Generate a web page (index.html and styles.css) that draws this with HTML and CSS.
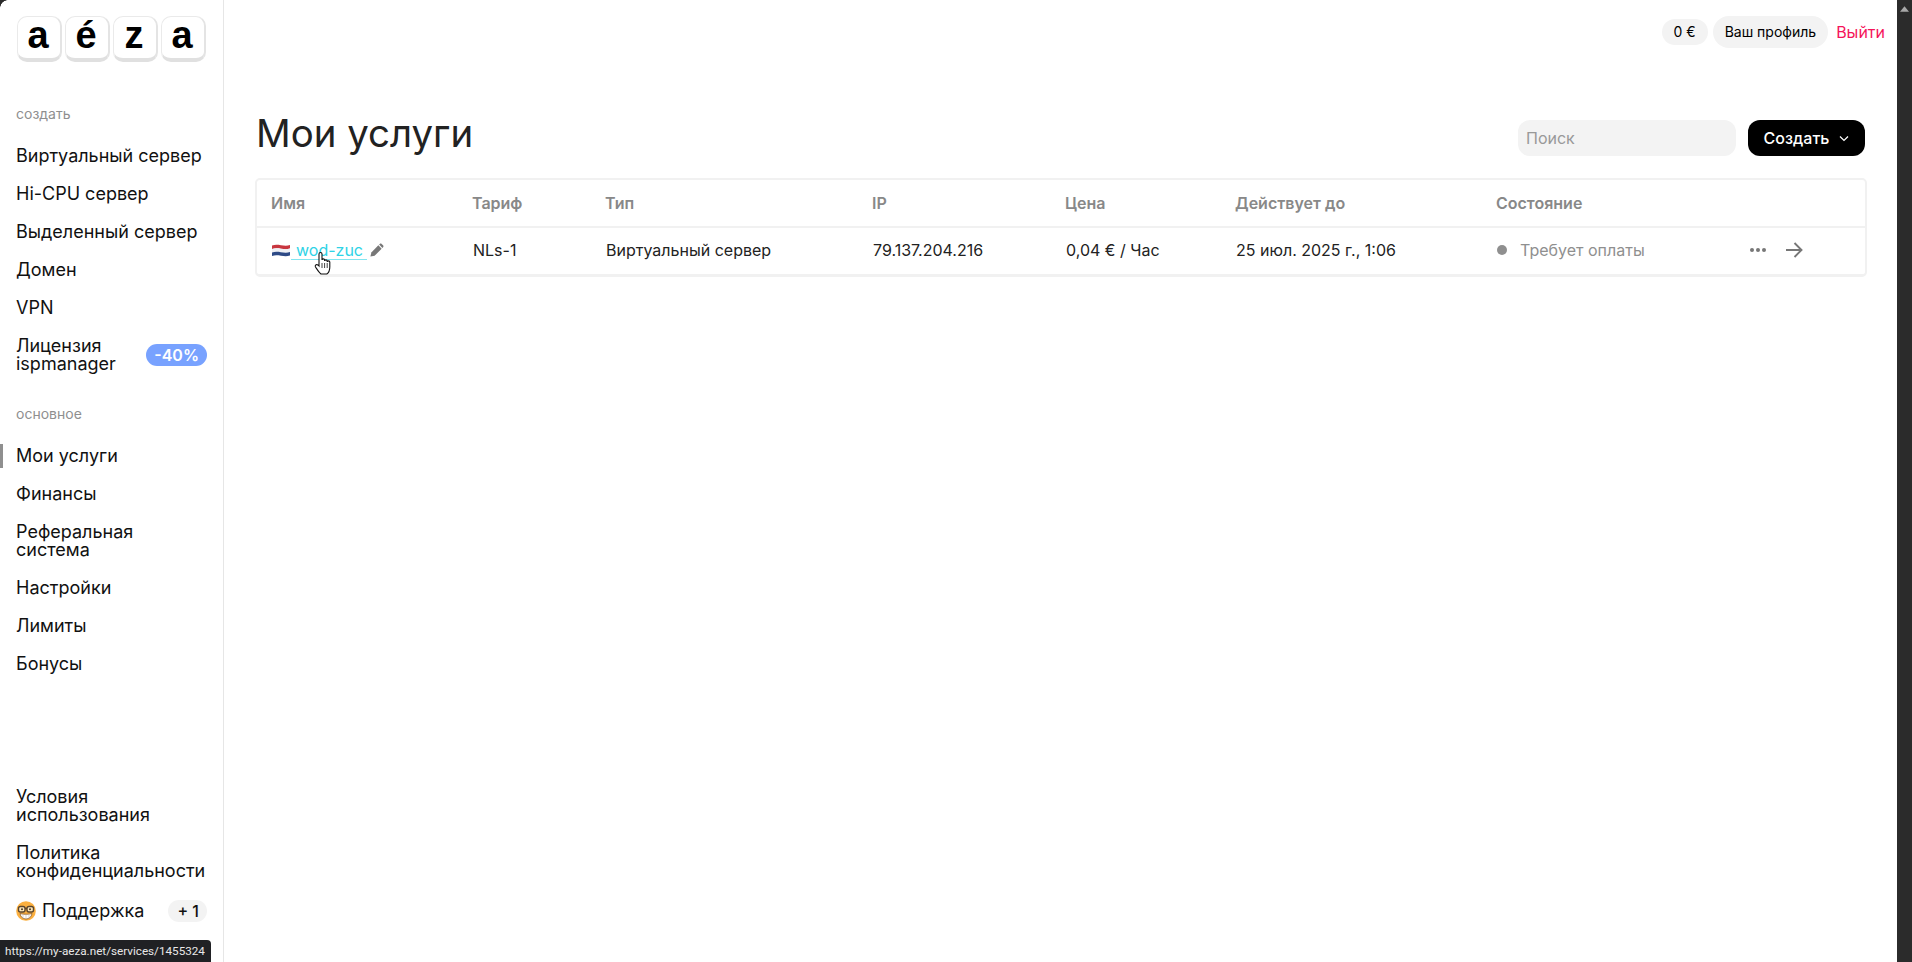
FILE: index.html
```html
<!DOCTYPE html>
<html lang="ru">
<head>
<meta charset="utf-8">
<title>Мои услуги</title>
<link rel="stylesheet" href="styles.css">
</head>
<body>
<div class="app">
  <aside class="sidebar">
    <div class="logo">
      <span class="key">a</span><span class="key">é</span><span class="key">z</span><span class="key">a</span>
    </div>
    <div class="nav-label first">создать</div>
    <nav class="nav">
      <a class="nav-item">Виртуальный сервер</a>
      <a class="nav-item">Hi-CPU сервер</a>
      <a class="nav-item">Выделенный сервер</a>
      <a class="nav-item">Домен</a>
      <a class="nav-item">VPN</a>
      <a class="nav-item between"><span>Лицензия<br>ispmanager</span><span class="promo">-40%</span></a>
    </nav>
    <div class="nav-label second">основное</div>
    <nav class="nav">
      <a class="nav-item active">Мои услуги</a>
      <a class="nav-item">Финансы</a>
      <a class="nav-item">Реферальная<br>система</a>
      <a class="nav-item">Настройки</a>
      <a class="nav-item">Лимиты</a>
      <a class="nav-item">Бонусы</a>
    </nav>
    <nav class="nav bottom">
      <a class="nav-item">Условия<br>использования</a>
      <a class="nav-item">Политика<br>конфиденциальности</a>
      <a class="nav-item between"><span class="support"><svg class="nerd" viewBox="0 0 20 20" width="20" height="20"><circle cx="10" cy="10" r="9.800" fill="#fbb040"/><path d="M4 12.500c3 1 9 1 12 0-.5 3.500-3 5.500-6 5.500s-5.500-2-6-5.500z" fill="#fff" stroke="#8a5a2a" stroke-width=".8"/><path d="M7 13.200v4.300M10 13.400v4.500M13 13.200v4.300" stroke="#c9b9a4" stroke-width=".6"/><rect x="2.500" y="5.500" width="6.500" height="5.500" rx="2" fill="#fde7b8" stroke="#5a452f" stroke-width="1.400"/><rect x="11" y="5.500" width="6.500" height="5.500" rx="2" fill="#fde7b8" stroke="#5a452f" stroke-width="1.400"/><path d="M9 7.500h2" stroke="#5a452f" stroke-width="1.400"/><circle cx="6" cy="8.300" r="1" fill="#4b3a2a"/><circle cx="14" cy="8.300" r="1" fill="#4b3a2a"/></svg>Поддержка</span><span class="count">+ 1</span></a>
    </nav>
  </aside>
  <main class="main">
    <header class="topbar">
      <span class="pill small">0 €</span>
      <span class="pill">Ваш профиль</span>
      <a class="logout">Выйти</a>
    </header>
    <div class="page-head">
      <h1>Мои услуги</h1>
      <div class="actions">
        <input class="search" placeholder="Поиск">
        <button class="create">Создать
          <svg viewBox="0 0 10 6" width="10" height="7"><path d="M1 1l4 4 4-4" fill="none" stroke="#fff" stroke-width="1.200"/></svg>
        </button>
      </div>
    </div>
    <section class="card">
      <div class="row head">
        <div>Имя</div><div>Тариф</div><div>Тип</div><div>IP</div><div>Цена</div><div>Действует до</div><div>Состояние</div><div></div>
      </div>
      <div class="row body">
        <div class="name">
          <svg class="flag" viewBox="0 0 20 14" width="20" height="14"><path d="M1 2.500c6-2 12 1.500 18-.5v3.500c-6 2-12-1.500-18 .5z" fill="#c8363f"/><path d="M1 6c6-2 12 1.500 18-.5V9c-6 2-12-1.500-18 .5z" fill="#eef0f4"/><path d="M1 9.500c6-2 12 1.500 18-.5v3.500c-6 2-12-1.500-18 .5z" fill="#2d4a86"/></svg>
          <a class="link">wod-zuc</a>
          <svg class="pen" viewBox="0 0 16 16" width="15" height="15"><path d="M1.500 14.500l1-4.500 7.500-7.500 3.500 3.500L6 13.500z" fill="#777"/><path d="M10.800 1.700l.7-.7c.6-.6 1.400-.6 2 0l1.500 1.500c.6.6.6 1.400 0 2l-.7.7z" fill="#777"/></svg>
        </div>
        <div>NLs-1</div>
        <div>Виртуальный сервер</div>
        <div>79.137.204.216</div>
        <div>0,04 € / Час</div>
        <div>25 июл. 2025 г., 1:06</div>
        <div class="state"><span class="dot"></span>Требует оплаты</div>
        <div class="row-actions">
          <svg viewBox="0 0 18 6" width="18" height="6"><circle cx="3" cy="3" r="2" fill="#777"/><circle cx="9" cy="3" r="2" fill="#777"/><circle cx="15" cy="3" r="2" fill="#777"/></svg>
          <svg viewBox="0 0 18 16" width="18" height="16"><path d="M1 8h15.500M9.500 1l7 7-7 7" fill="none" stroke="#777" stroke-width="1.900"/></svg>
        </div>
      </div>
    </section>
  </main>
  <div class="scrollbar"><svg viewBox="0 0 10 6" width="9" height="6"><path d="M5 0l5 6H0z" fill="#a8a8a8"/></svg></div>
</div>
<div class="corner"></div>
<svg class="cursor" viewBox="0 0 18 24" width="18" height="24"><path d="M5 13V3c0-2 3-2 3 0v6c0-1.500 2.600-1.500 2.600 0v1c0-1.500 2.600-1.500 2.600 0v1c0-1.500 2.600-1.500 2.600 0v5c0 3-1.500 6-3 7H7c-2-1.500-3.500-4-5.500-7-1-2 1.500-3.500 3.500-1z" fill="#fff" stroke="#111" stroke-width="1.100"/><path d="M8 12v5M10.600 12v5M13.200 12v5" stroke="#111" stroke-width=".8"/></svg>
<div class="status">https://my-aeza.net/services/1455324</div>
</body>
</html>
```

FILE: styles.css
```css
* { box-sizing: border-box; }
html, body { margin: 0; height: 100%; overflow: hidden; }
body { font-family: Inter, "Liberation Sans", sans-serif; color: #222; background: #fff; }
.app { display: flex; height: 962px; }
.sidebar { width: 224px; flex: none; border-right: 1px solid #e6e6e6; padding: 16px 16px 0; display: flex; flex-direction: column; height: 100%; }
.logo { display: flex; gap: 3px; margin-left: 1px; }
.key { width: 45px; height: 46px; padding-right: 2px; border-radius: 10px; background: #fff; border: 1px solid #eaeaea; border-bottom: 4px solid #e0e0e0; border-right: 2px solid #e4e4e4; font: 700 38px/36px "Liberation Sans", sans-serif; color: #000; text-align: center; }
.nav-label { font-size: 14px; line-height: 16px; color: #8f8f8f; }
.nav-label.first { margin-top: 44px; margin-bottom: 25px; }
.nav-label.second { margin-top: 33px; margin-bottom: 25px; }
.nav { display: flex; flex-direction: column; gap: 20px; }
.nav.bottom { margin-top: auto; padding-bottom: 40px; gap: 20px; }
.nav-item { position: relative; font-size: 18px; line-height: 18px; color: #111; }
.between { display: flex; justify-content: space-between; align-items: center; }
.active::before { content: ""; position: absolute; left: -16px; top: -3px; width: 3px; height: 24px; background: #8f8f8f; }
.promo { background: #78a2ff; color: #fff; font-size: 16px; font-weight: 600; line-height: 22px; padding: 0 8px; border-radius: 11px; }
.count { background: #f3f3f3; color: #111; font-size: 16px; font-weight: 500; line-height: 22px; padding: 0 8px 0 9px; border-radius: 11px; }
.support { display: flex; align-items: center; gap: 6px; }
.nerd { flex: none; }
.main { flex: 1; min-width: 0; padding: 0 32px; }
.topbar { display: flex; justify-content: flex-end; align-items: center; gap: 5px; height: 64px; margin-right: -20px; }
.pill { background: #f3f3f3; color: #000; font-size: 14px; line-height: 32px; padding: 0 12px; border-radius: 16px; }
.pill.small { line-height: 26px; border-radius: 13px; }
.logout { color: #f5135a; font-size: 16px; margin-left: 3px; }
.page-head { display: flex; justify-content: space-between; align-items: flex-end; margin-top: 46px; height: 46px; }
h1 { margin: 0; font-size: 38.4px; font-weight: 400; line-height: 46px; color: #222; }
.actions { display: flex; gap: 12px; align-items: center; }
.search { width: 218px; height: 36px; border: 0; border-radius: 12px; background: #f3f3f3; padding: 0 8px; font: 16px Inter, sans-serif; }
.search::placeholder { color: #999; opacity: 1; }
.create { width: 117px; height: 36px; border: 0; border-radius: 12px; background: #000; color: #fff; font: 500 16px Inter, sans-serif; display: flex; align-items: center; justify-content: center; gap: 10px; }
.card { margin: 22px 0 0 -1px; border: 2px solid #f1f1f1; border-bottom-width: 3px; border-radius: 5px; width: 1612px; }
.row { display: grid; grid-template-columns: 201px 133px 267px 193px 170px 261px 230px 1fr; align-items: center; padding: 0 0 0 14px; font-size: 16px; }
.row.head { height: 48px; color: #888; font-weight: 600; border-bottom: 2px solid #f1f1f1; }
.row.body { height: 46px; color: #222; padding-bottom: 2px; }
.row.body > div:not(:first-child) { position: relative; left: 1px; }
.name { display: flex; align-items: center; }
.flag { margin-right: 0; }
.link { color: #2ed3e6; border-bottom: 1px solid #84e5f0; line-height: 18px; padding: 0 4px 0 5px; }
.pen { margin-left: 2px; }
.state { display: flex; align-items: center; color: #8f8f8f; }
.dot { width: 10px; height: 10px; border-radius: 50%; background: #8f8f8f; margin-right: 13px; }
.row-actions { display: flex; align-items: center; gap: 18px; margin-left: 22px; }
.scrollbar { width: 15px; flex: none; background: #2b2b2b; display: flex; justify-content: center; padding-top: 6px; }
.corner { position: absolute; left: 0; top: 0; width: 8px; height: 8px; background: radial-gradient(circle at 8px 8px, transparent 7.500px, #2b2b2b 8px); }
.cursor { position: absolute; left: 314px; top: 251px; }
.status { position: absolute; left: 0; bottom: 0; width: 211px; height: 22px; background: #202124; color: #e8e8e8; font: 11.7px/22px Roboto, sans-serif; padding-left: 5px; border-radius: 0 4px 0 0; white-space: nowrap; }
```
